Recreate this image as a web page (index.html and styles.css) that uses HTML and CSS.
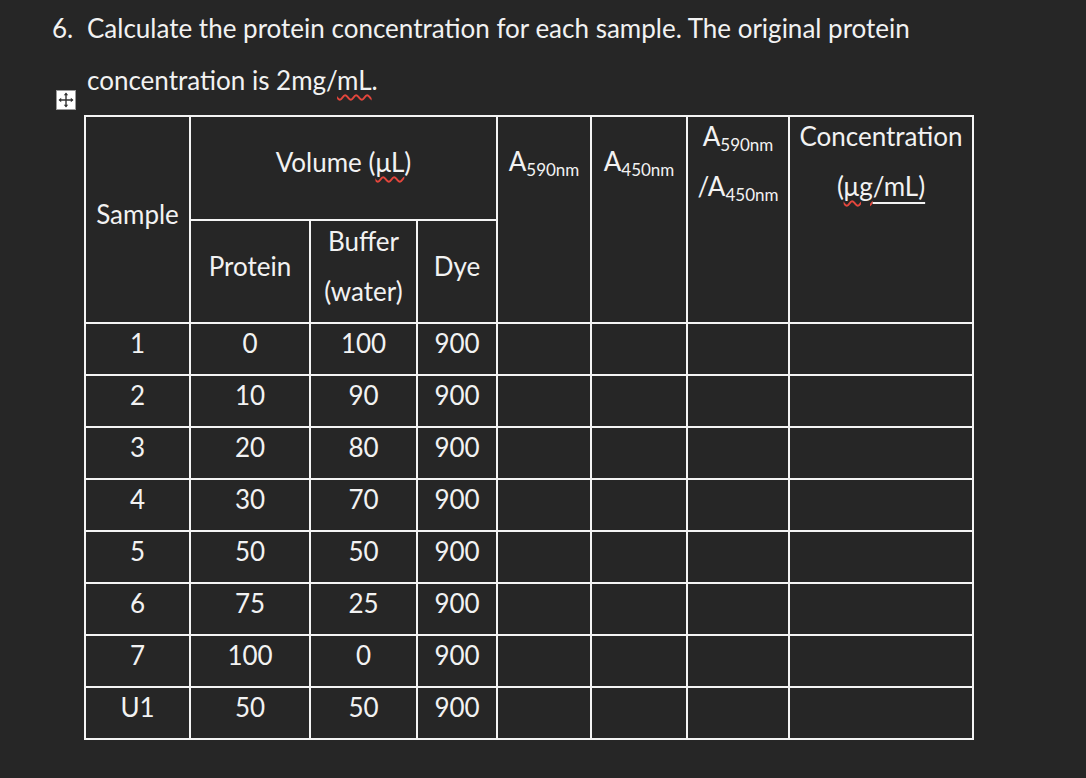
FILE: index.html
```html
<!DOCTYPE html>
<html>
<head>
<meta charset="utf-8">
<link rel="stylesheet" href="styles.css">
</head>
<body>
<div class="page">
  <div class="item">
    <span class="num">6.</span>
    <p class="text">Calculate the protein concentration for each sample. The original protein concentration is 2mg/<span class="spell">mL</span>.</p>
  </div>
  <div class="table-wrap">
    <span class="move-handle" aria-hidden="true">
      <svg width="20" height="20" viewBox="0 0 20 20">
        <rect x="0.5" y="0.5" width="19" height="19" fill="#ffffff" stroke="#9a9a9a" stroke-width="1"/>
        <path d="M10 3.5 V16.5 M3.5 10 H16.5" stroke="#333" stroke-width="1.4" fill="none"/>
        <path d="M10 2.5 L7.8 5.2 H12.2 Z M10 17.5 L7.8 14.8 H12.2 Z M2.5 10 L5.2 7.8 V12.2 Z M17.5 10 L14.8 7.8 V12.2 Z" fill="#333"/>
      </svg>
    </span>
    <table class="grid">
      <colgroup>
        <col class="c-sample">
        <col class="c-protein">
        <col class="c-buffer">
        <col class="c-dye">
        <col class="c-a590">
        <col class="c-a450">
        <col class="c-ratio">
        <col class="c-conc">
      </colgroup>
      <tbody>
        <tr class="h1">
          <td rowspan="2"><span class="ln">Sample</span></td>
          <td colspan="3"><span class="ln">Volume (<span class="spell">μL</span>)</span></td>
          <td rowspan="2" class="top"><span class="ln vol">A<sub>590nm</sub></span></td>
          <td rowspan="2" class="top"><span class="ln vol">A<sub>450nm</sub></span></td>
          <td rowspan="2" class="top"><span class="ln">A<sub>590nm</sub></span><span class="ln">/A<sub>450nm</sub></span></td>
          <td rowspan="2" class="top"><span class="ln">Concentration</span><span class="ln">(<span class="spell">μg</span><span class="uline">/mL)</span></span></td>
        </tr>
        <tr class="h2">
          <td><span class="ln">Protein</span></td>
          <td><span class="ln">Buffer</span><span class="ln">(water)</span></td>
          <td><span class="ln">Dye</span></td>
        </tr>
        <tr><td><span class="ln">1</span></td><td><span class="ln">0</span></td><td><span class="ln">100</span></td><td><span class="ln">900</span></td><td></td><td></td><td></td><td></td></tr>
        <tr><td><span class="ln">2</span></td><td><span class="ln">10</span></td><td><span class="ln">90</span></td><td><span class="ln">900</span></td><td></td><td></td><td></td><td></td></tr>
        <tr><td><span class="ln">3</span></td><td><span class="ln">20</span></td><td><span class="ln">80</span></td><td><span class="ln">900</span></td><td></td><td></td><td></td><td></td></tr>
        <tr><td><span class="ln">4</span></td><td><span class="ln">30</span></td><td><span class="ln">70</span></td><td><span class="ln">900</span></td><td></td><td></td><td></td><td></td></tr>
        <tr><td><span class="ln">5</span></td><td><span class="ln">50</span></td><td><span class="ln">50</span></td><td><span class="ln">900</span></td><td></td><td></td><td></td><td></td></tr>
        <tr><td><span class="ln">6</span></td><td><span class="ln">75</span></td><td><span class="ln">25</span></td><td><span class="ln">900</span></td><td></td><td></td><td></td><td></td></tr>
        <tr><td><span class="ln">7</span></td><td><span class="ln">100</span></td><td><span class="ln">0</span></td><td><span class="ln">900</span></td><td></td><td></td><td></td><td></td></tr>
        <tr><td><span class="ln">U1</span></td><td><span class="ln">50</span></td><td><span class="ln">50</span></td><td><span class="ln">900</span></td><td></td><td></td><td></td><td></td></tr>
      </tbody>
    </table>
  </div>
</div>
</body>
</html>
```

FILE: styles.css
```css
html, body {
  margin: 0;
  padding: 0;
  background: #262626;
}
body {
  width: 1086px;
  height: 778px;
  overflow: hidden;
  color: #f2f2f2;
  font-family: Lato, "Open Sans", sans-serif;
  font-size: 26px;
}
.page {
  padding: 2px 0 0 52px;
}
.item {
  display: flex;
  width: 880px;
}
.num {
  width: 35px;
  flex: none;
  line-height: 52px;
}
.text {
  margin: 0;
  line-height: 52px;
}
.spell {
  text-decoration: underline wavy #e5463c;
  text-decoration-thickness: 1.5px;
  text-underline-offset: 4px;
}
.uline {
  text-decoration: underline;
  text-decoration-thickness: 2px;
  text-underline-offset: 6px;
}
.table-wrap {
  position: relative;
  margin-top: 9px;
  margin-left: 32px;
}
.move-handle {
  position: absolute;
  left: -28px;
  top: -25px;
  width: 20px;
  height: 20px;
  display: block;
}
.move-handle svg { display: block; }
.grid {
  border-collapse: collapse;
  table-layout: fixed;
  width: 888px;
}
.c-sample { width: 105px; }
.c-protein { width: 120px; }
.c-buffer { width: 107px; }
.c-dye { width: 80px; }
.c-a590 { width: 94px; }
.c-a450 { width: 96px; }
.c-ratio { width: 102px; }
.c-conc { width: 184px; }
.grid td {
  border: 2px solid #f4f4f4;
  padding: 0;
  text-align: center;
  vertical-align: middle;
  height: 50px;
}
.grid tr.h1 td { height: 102px; }
.grid tr.h2 td { height: 101px; }
.grid td.top { vertical-align: top; }
.ln {
  display: block;
  line-height: 38px;
  margin-bottom: 12px;
  white-space: nowrap;
}
.ln + .ln { margin-top: 2px; }
.ln.vol { margin-top: 25px; }
sub {
  font-size: 17px;
  vertical-align: -5px;
  line-height: 0;
}
```
